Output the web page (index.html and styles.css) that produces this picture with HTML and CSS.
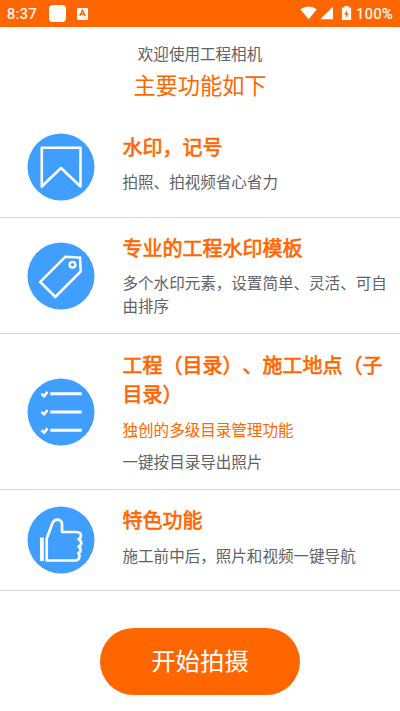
FILE: index.html
```html
<!DOCTYPE html>
<html lang="zh-CN">
<head>
<meta charset="utf-8">
<title>工程相机</title>
<link rel="stylesheet" href="styles.css">
</head>
<body>
<header class="status">
  <span class="time">8:37</span>
  <span class="app-chip"></span>
  <svg class="a-icon" width="11" height="12" viewBox="0 0 11 12"><rect width="11" height="12" rx="1" fill="#fff"/><path d="M2.8 8L5.5 2.3 8.2 8M3.8 6.2h3.4" fill="none" stroke="#ff6600" stroke-width="1.5"/><path d="M5.5 10h3.5" stroke="#ffb17d" stroke-width=".8"/></svg>
  <svg class="signals" width="52" height="16" viewBox="0 0 52 16" fill="#fff"><path d="M.3 3.2Q8.600-2.200 16.900 3.200L8.600 13.200Z"/><path d="M20.300 13.200H33V.5Z"/><path fill-rule="evenodd" d="M42.500 1.500h2V0h4v1.500h2q.6 0 .6.600v11.300q0 .6-.6.600h-8q-.6 0-.6-.6V2.100q0-.6.600-.6ZM47.500 3.500l-3.500 5h2.300l-.9 3.800 3.600-5h-2.300z"/></svg>
  <span class="percent">100%</span>
</header>
<main>
  <div class="intro">
    <p class="welcome">欢迎使用工程相机</p>
    <h1>主要功能如下</h1>
  </div>
  <section class="row row-first">
    <svg class="icon" viewBox="0 0 68 68"><circle cx="34" cy="34" r="33.500"/><path d="M14.800 14.800H53.500V53.500L34 35 14.800 53.500Z" stroke-width="2.600"/></svg>
    <div class="text">
      <h2>水印，记号</h2>
      <p>拍照、拍视频省心省力</p>
    </div>
  </section>
  <section class="row row-template">
    <svg class="icon" viewBox="0 0 68 68"><circle cx="34" cy="34" r="33.500"/><path class="sharp" d="M38.300 14.800L53 15.600 53.700 29.500 28.300 55 13.200 39.900Z" stroke-width="2.500"/><circle class="ring" cx="45.500" cy="22.800" r="2.900"/></svg>
    <div class="text">
      <h2>专业的工程水印模板</h2>
      <p>多个水印元素，设置简单、灵活、可自由排序</p>
    </div>
  </section>
  <section class="row row-folders">
    <svg class="icon" viewBox="0 0 68 68"><circle cx="34" cy="34" r="33.500"/><path class="sharp" d="M23.300 15.800H54.700M23.300 33.900H54.700M23.300 52.200H54.700" stroke-width="3"/><path class="sharp" d="M14.400 15.800l2.700 2.300 3.400-4.200M14.400 34l2.700 2.300 3.400-4.200M14.400 52.300l2.700 2.300 3.400-4.200" stroke-width="2.500"/></svg>
    <div class="text">
      <h2>工程（目录）、施工地点（子目录）</h2>
      <p class="accent">独创的多级目录管理功能</p>
      <p>一键按目录导出照片</p>
    </div>
  </section>
  <section class="row row-special">
    <svg class="icon" viewBox="0 0 68 68"><circle cx="34" cy="34" r="33.500"/><path d="M14.900 31.500V55" class="sharp" stroke-width="3.800"/><path d="M19.700 54.500V32.500L25.500 17Q27 13.300 31 13.600 35 14.200 35 18.500V26H49Q54 26 54 29.500 54 32 51.500 33.200 54.300 34.500 54.300 37 54.300 39.500 51.500 40.800 54 42.300 53.500 44.500 53.300 46.300 51.300 47.300 53 49 52.300 51.500 51.500 54.500 48 54.500Z" stroke-width="2.700"/></svg>
    <div class="text">
      <h2>特色功能</h2>
      <p>施工前中后，照片和视频一键导航</p>
    </div>
  </section>
  <button class="start" type="button">开始拍摄</button>
</main>
</body>
</html>
```

FILE: styles.css
```css
* {
  box-sizing: border-box;
}

body,
h1,
h2,
p {
  margin: 0;
  font-weight: 400;
}

body {
  height: 711px;
  overflow: hidden;
  background: #fff;
  color: #606266;
  font-family: "Noto Sans CJK SC", sans-serif;
  text-spacing-trim: space-all;
}

.status {
  display: flex;
  align-items: center;
  height: 27px;
  padding: 0 6px 0 7px;
  background: #ff6600;
  color: #fff;
  font: 14.5px/27px Roboto, sans-serif;
  -webkit-text-stroke: 0.2px #fff;
}

.time {
  width: 42px;
  letter-spacing: 0.6px;
  padding-top: 1px;
}

.app-chip {
  width: 17px;
  height: 17px;
  border-radius: 4px;
  background: #fff;
}

.a-icon {
  margin-left: 11px;
}

.signals {
  margin-left: auto;
  margin-right: 4px;
}

.percent {
  width: 38px;
  padding-top: 1px;
  letter-spacing: 0.55px;
}

.intro {
  height: 90px;
  padding-top: 14px;
  text-align: center;
}

.welcome {
  font-size: 15.55px;
  line-height: 24px;
}

h1 {
  color: #ff6600;
  font-size: 22.2px;
  line-height: 32px;
  margin-top: 3px;
}

.row {
  display: grid;
  grid-template-columns: 67px 1fr;
  column-gap: 28px;
  padding: 15px 10px 0 27.5px;
  border-bottom: 1px solid #d3d3d3;
}

.row-first,
.row-special {
  height: 101px;
}

.row-template {
  height: 116px;
}

.row-folders {
  height: 156px;
  padding-top: 16px;
}

.icon {
  width: 68px;
  height: 68px;
  align-self: center;
  margin: -15px 0 0 -0.3px;
  fill: none;
  stroke: #fff;
  stroke-linejoin: round;
}

.row-first .icon,
.row-special .icon {
  margin-top: -16px;
}

.icon circle {
  fill: #409eff;
  stroke: none;
}

.icon .sharp {
  stroke-linejoin: miter;
}

.icon .ring {
  fill: none;
  stroke: #fff;
  stroke-width: 2.3;
}

h2 {
  color: #ff6600;
  font-size: 20px;
  line-height: 29px;
  -webkit-text-stroke: 0.65px #ff6600;
}

.text p {
  margin-top: 9px;
  font-size: 15.55px;
  line-height: 23.2px;
}

.row-folders h2 {
  padding-bottom: 1px;
}

.row-special .text p {
  margin-top: 10px;
}

.text .accent {
  color: #ff6600;
}

.start {
  display: block;
  width: 200px;
  height: 67px;
  margin: 37px auto 0;
  padding: 0 0 3px;
  border: 0;
  border-radius: 34px;
  background: #ff6600;
  color: #fff;
  font: 24.4px/64px "Noto Sans CJK SC", sans-serif;
}
```
